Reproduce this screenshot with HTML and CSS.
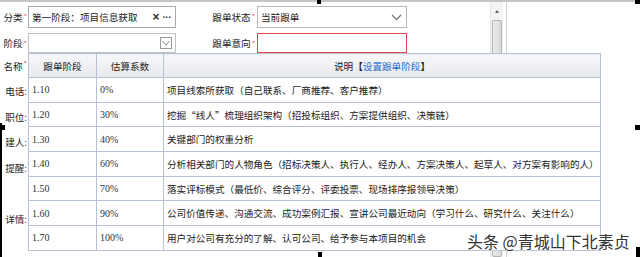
FILE: index.html
```html
<!DOCTYPE html>
<html lang="zh">
<head>
<meta charset="utf-8">
<link rel="stylesheet" href="styles.css">
</head>
<body>
<div class="page">
  <div class="panel">
    <div class="form-area">
      <div class="form">
        <div class="lab"><span>分类</span><i>*</i></div>
        <div class="field f1">
          <span class="val">第一阶段：项目信息获取</span>
          <span class="clear">×</span><span class="more">···</span>
        </div>
        <div class="gap"></div>
        <div class="rlab">跟单状态<i>*</i></div>
        <div class="field sel">
          <span class="val">当前跟单</span>
          <svg class="chev" width="11" height="7" viewBox="0 0 11 7"><path d="M1 1 L5.5 5.5 L10 1" fill="none" stroke="#777" stroke-width="1.3"/></svg>
        </div>

        <div class="lab"><span>阶段</span><i>*</i></div>
        <div class="field f2">
          <svg class="boxico" width="12" height="12" viewBox="0 0 12 12"><rect x="0.5" y="0.5" width="11" height="11" fill="#fff" stroke="#999"/><path d="M2.5 4 L6 8 L9.5 4" fill="none" stroke="#888" stroke-width="1"/></svg>
        </div>
        <div class="gap"></div>
        <div class="rlab">跟单意向<i>*</i></div>
        <div class="field red"></div>
      </div>
      <div class="more-labels">
        <div class="lab2"><span>名称</span><i>*</i></div>
        <div class="lab2"><span>电话:</span></div>
        <div class="lab2"><span>职位:</span></div>
        <div class="lab2"><span>建人:</span></div>
        <div class="lab2"><span>提醒:</span></div>
        <div class="lab2"></div>
        <div class="lab2"><span>详情:</span></div>
      </div>
    </div>
    <div class="scrollbar">
      <div class="arrow"></div>
      <div class="thumb"></div>
    </div>
  </div>

  <table class="popup">
    <colgroup><col class="c1"><col class="c2"><col class="c3"></colgroup>
    <thead>
      <tr><th>跟单阶段</th><th>估算系数</th><th>说明<span class="br">【</span><a class="link">设置跟单阶段</a><span class="br">】</span></th></tr>
    </thead>
    <tbody>
      <tr><td class="num">1.10</td><td class="num">0%</td><td>项目线索所获取（自己联系、厂商推荐、客户推荐）</td></tr>
      <tr><td class="num">1.20</td><td class="num">30%</td><td>挖掘“线人”梳理组织架构（招投标组织、方案提供组织、决策链）</td></tr>
      <tr><td class="num">1.30</td><td class="num">40%</td><td>关键部门的权重分析</td></tr>
      <tr><td class="num">1.40</td><td class="num">60%</td><td>分析相关部门的人物角色（招标决策人、执行人、经办人、方案决策人、起草人、对方案有影响的人）</td></tr>
      <tr><td class="num">1.50</td><td class="num">70%</td><td>落实评标模式（最低价、综合评分、评委投票、现场排序报领导决策）</td></tr>
      <tr><td class="num">1.60</td><td class="num">90%</td><td>公司价值传递、沟通交流、成功案例汇报、宣讲公司最近动向（学习什么、研究什么、关注什么）</td></tr>
      <tr><td class="num">1.70</td><td class="num">100%</td><td>用户对公司有充分的了解、认可公司、给予参与本项目的机会</td></tr>
    </tbody>
  </table>

  <div class="watermark">头条 @青城山下北素贞</div>

  <div class="handle h-tm"></div>
  <div class="handle h-tr"></div>
  <div class="handle h-rm"></div>
  <div class="handle h-rb"></div>
  <div class="handle h-bm"></div>
  <div class="handle h-lm"></div>
  <div class="handle h-lline"></div>
</div>
</body>
</html>
```

FILE: styles.css
```css
html, body {
  margin: 0;
  padding: 0;
  background: #fff;
}
body {
  width: 640px;
  height: 257px;
  overflow: hidden;
  font-family: "Noto Sans CJK SC", "Liberation Sans", sans-serif;
  font-size: 9.6px;
  color: #1a1a1a;
}
.page {
  position: relative;
  width: 640px;
  height: 257px;
  border-top: 2px solid #c4c4c4;
  box-sizing: border-box;
}
.panel {
  display: flex;
  width: 507px;
  height: 255px;
  border-right: 1px solid #cfcfcf;
  box-sizing: border-box;
}
.form-area {
  flex: 1;
  padding-top: 4px;
}
.form {
  display: grid;
  grid-template-columns: 28px 148px 30px 51px 150px;
  grid-template-rows: 22px 20px;
  row-gap: 5px;
}
.lab, .lab2 {
  display: flex;
  justify-content: flex-end;
  align-items: center;
  white-space: nowrap;
  color: #222;
  padding-right: 1px;
}
.lab i, .lab2 i, .rlab i {
  font-style: normal;
  color: #e04040;
  font-size: 7px;
  align-self: flex-start;
  margin-top: 5px;
  margin-left: 1px;
}
.rlab {
  display: flex;
  align-items: center;
  justify-content: flex-end;
  padding-right: 2px;
  color: #222;
  white-space: nowrap;
}
.field {
  display: flex;
  align-items: center;
  border: 1px solid #a9a9a9;
  box-sizing: border-box;
  background: #fff;
  padding: 0 3px;
  white-space: nowrap;
  min-width: 0;
}
.f1 .val { flex: 1; }
.clear {
  font-family: "Liberation Sans", sans-serif;
  font-size: 12px;
  font-weight: bold;
  color: #333;
  margin-right: 3px;
}
.more {
  font-family: "Liberation Sans", sans-serif;
  font-size: 10px;
  font-weight: bold;
  color: #444;
  letter-spacing: -0.5px;
  margin-right: 1px;
}
.f2 {
  justify-content: flex-end;
  border-color: #c0c0c0;
}
.sel {
  border-color: #b8b8b8;
}
.sel .val { flex: 1; }
.chev { margin-right: 1px; }
.red {
  border-color: #dd4a4a;
}
.more-labels {
  display: flex;
  flex-direction: column;
  width: 28px;
}
.lab2 {
  height: 25.5px;
}
.scrollbar {
  width: 13px;
  margin-right: 3px;
  background: #f4f4f4;
  border-left: 1px solid #e6e6e6;
  box-sizing: border-box;
  display: flex;
  flex-direction: column;
  align-items: center;
  padding-top: 8px;
}
.arrow {
  width: 0;
  height: 0;
  border-left: 2.5px solid transparent;
  border-right: 2.5px solid transparent;
  border-bottom: 3px solid #666;
}
.thumb {
  margin-top: 7px;
  width: 10px;
  flex: 1;
  border: 1px solid #b4b4b4;
  border-radius: 2px;
  background: linear-gradient(90deg, #ececec, #d8d8d8);
  box-sizing: border-box;
}
.popup {
  position: absolute;
  left: 28px;
  top: 51px;
  width: 572px;
  border-collapse: collapse;
  background: #fff;
  table-layout: fixed;
}
.c1 { width: 68px; }
.c2 { width: 67px; }
.c3 { width: 437px; }
.popup th, .popup td {
  border: 1px solid #b6c2d4;
  white-space: nowrap;
  overflow: hidden;
}
.popup th {
  height: 23px;
  font-weight: normal;
  color: #222;
  background: linear-gradient(#f6f7f9, #e8eaee);
  padding: 0;
}
.popup td {
  height: 23.7px;
  padding: 0 0 0 3px;
  color: #1a1a1a;
}
.popup td.num {
  font-family: "Liberation Serif", "Noto Sans CJK SC", serif;
  font-size: 10px;
  color: #333;
}
.link {
  color: #1f6fd0;
}
.br {
  color: #222;
  font-weight: bold;
}
.watermark {
  position: absolute;
  left: 467px;
  top: 227px;
  font-size: 16px;
  color: #333;
  white-space: nowrap;
  text-shadow: 0 0 2px #fff, 0 0 2px #fff;
}
.handle {
  position: absolute;
  background: #000;
}
.h-tm { left: 317px; top: -2px; width: 4px; height: 4px; }
.h-tr { left: 635px; top: -2px; width: 5px; height: 4px; }
.h-rm { left: 635px; top: 123px; width: 5px; height: 5px; }
.h-rb { left: 636px; top: 245px; width: 4px; height: 10px; }
.h-bm { left: 318px; top: 250px; width: 4px; height: 5px; }
.h-lm { left: 0; top: 123px; width: 5px; height: 5px; }
.h-lline { left: 0; top: 121px; width: 2px; height: 134px; }
```
